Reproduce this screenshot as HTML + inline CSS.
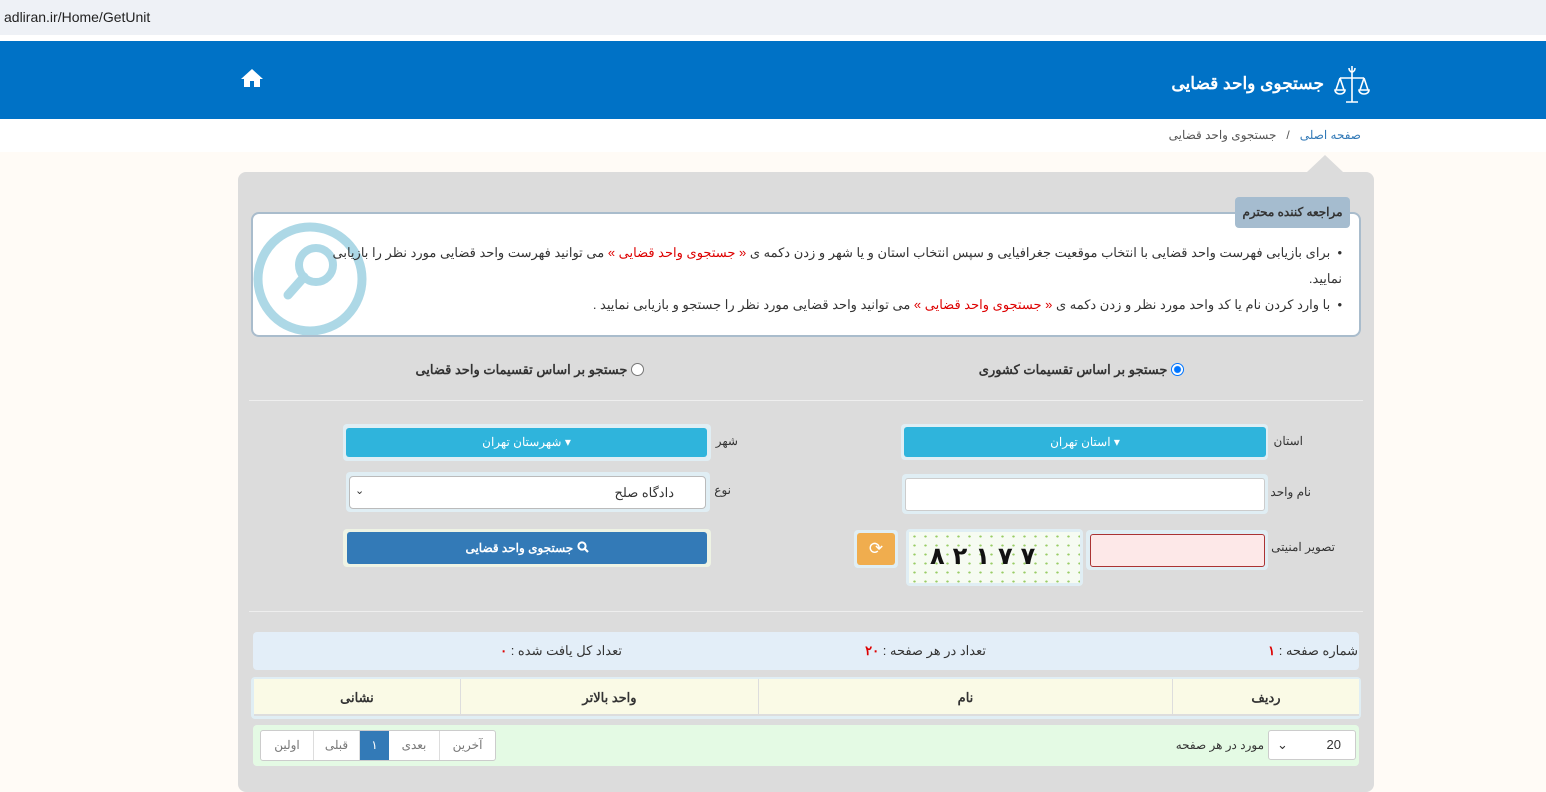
<!DOCTYPE html>
<html><head><meta charset="utf-8"><style>
*{margin:0;padding:0;box-sizing:border-box}
body{width:1546px;height:772px;overflow:hidden;position:relative;background:#fffbf6;font-family:"Liberation Sans","Noto Sans CJK SC",sans-serif;font-size:13px;color:#333}
.a{position:absolute}
.r{direction:rtl;white-space:nowrap}
.b{font-weight:bold}
.c{text-align:center;line-height:37px}
</style></head><body>
<div class="a" style="left:0;top:0;width:1546px;height:35px;background:#eef1f6"></div>
<div class="a" style="left:4px;top:9px;font-size:14px;color:#222">adliran.ir/Home/GetUnit</div>
<div class="a" style="left:0;top:35px;width:1546px;height:6px;background:#fff"></div>
<div class="a" style="left:0;top:41px;width:1546px;height:78px;background:#0072c6"></div>
<svg class="a" style="left:240px;top:68px" width="24" height="20" viewBox="0 0 24 20"><path d="M12 1L1 11h3v8h6v-6h4v6h6v-8h3z" fill="#fff"/></svg>
<div class="a r b" style="right:222px;top:74px;font-size:17px;color:#fff">جستجوی واحد قضایی</div>
<svg class="a" style="left:1334px;top:64px" width="36" height="40" viewBox="0 0 36 40" fill="none" stroke="#fff" stroke-width="1.6"><path d="M18 2v36M6 14h24M6 14l-4 12M6 14l4 12M30 14l-4 12M30 14l4 12M1 26a5 4 0 0 0 10 0zM25 26a5 4 0 0 0 10 0zM12 38h12M15 4a3 4 0 0 0 6 0"/></svg>
<div class="a" style="left:0;top:119px;width:1546px;height:33px;background:#fff"></div>
<div class="a r" style="right:185px;top:128px;font-size:12px;color:#555"><span style="color:#337ab7">صفحه اصلی</span>&nbsp;&nbsp;&nbsp;/&nbsp;&nbsp;&nbsp;جستجوی واحد قضایی</div>
<div class="a" style="left:238px;top:172px;width:1136px;height:620px;background:#dcdcdc;border-radius:8px"></div>
<div class="a" style="left:1307px;top:155px;width:0;height:0;border-left:18px solid transparent;border-right:18px solid transparent;border-bottom:17px solid #dcdcdc"></div>
<div class="a" style="left:251px;top:212px;width:1110px;height:125px;background:#fff;border:2px solid #a9bccc;border-radius:8px;overflow:hidden">
 <svg class="a" style="left:0;top:8px" width="120" height="120" viewBox="0 0 120 120"><circle cx="57" cy="57" r="52" fill="none" stroke="#add8e6" stroke-width="9"/><circle cx="63" cy="43" r="17" fill="none" stroke="#add8e6" stroke-width="8"/><path d="M51 55L35 73" stroke="#add8e6" stroke-width="9" stroke-linecap="round"/></svg>
</div>
<div class="a r b" style="left:1235px;top:197px;width:115px;height:31px;background:#a5bccf;border-radius:4px;font-size:12px;color:#333;text-align:center;line-height:31px">مراجعه کننده محترم</div>
<div class="a r" style="right:204px;top:240px;width:1015px;font-size:13px;line-height:26px;white-space:normal">• &nbsp;برای بازیابی فهرست واحد قضایی با انتخاب موقعیت جغرافیایی و سپس انتخاب استان و یا شهر و زدن دکمه ی <span style="color:#d00">« جستجوی واحد قضایی »</span> می توانید فهرست واحد قضایی مورد نظر را بازیابی نمایید.</div>
<div class="a r" style="right:204px;top:292px;font-size:13px;line-height:26px">• &nbsp;با وارد کردن نام یا کد واحد مورد نظر و زدن دکمه ی <span style="color:#d00">« جستجوی واحد قضایی »</span> می توانید واحد قضایی مورد نظر را جستجو و بازیابی نمایید .</div>
<div class="a r b" style="right:362px;top:362px;font-size:13px"><span style="display:inline-block;width:13px;height:13px;border-radius:50%;border:1px solid #0075ff;background:radial-gradient(#0075ff 3px,#fff 4px);vertical-align:-2px"></span> جستجو بر اساس تقسیمات کشوری</div>
<div class="a r b" style="right:902px;top:362px;font-size:13px"><span style="display:inline-block;width:13px;height:13px;border-radius:50%;border:1px solid #777;background:#fff;vertical-align:-2px"></span> جستجو بر اساس تقسیمات واحد قضایی</div>
<div class="a" style="left:249px;top:400px;width:1114px;height:1px;background:#eee"></div>
<div class="a" style="left:249px;top:611px;width:1114px;height:1px;background:#eee"></div>
<!-- right column -->
<div class="a r" style="right:243px;top:434px;font-size:12px">استان</div>
<div class="a" style="left:901px;top:424px;width:367px;height:36px;background:#e0eef4;border-radius:4px"></div>
<div class="a r" style="left:904px;top:427px;width:362px;height:30px;background:#2fb4dc;border-radius:3px;color:#fff;font-size:12px;text-align:center;line-height:30px">▾ استان تهران</div>
<div class="a r" style="right:235px;top:485px;font-size:12px">نام واحد</div>
<div class="a" style="left:902px;top:474px;width:366px;height:40px;background:#e0eef4;border-radius:4px"></div>
<div class="a" style="left:905px;top:478px;width:360px;height:33px;background:#fff;border:1px solid #ccc;border-radius:3px"></div>
<div class="a r" style="right:211px;top:540px;font-size:12px">تصویر امنیتی</div>
<div class="a" style="left:1086px;top:530px;width:182px;height:40px;background:#e0eef4;border-radius:4px"></div>
<div class="a" style="left:1090px;top:534px;width:175px;height:33px;background:#fde8e8;border:1px solid #a33;border-radius:3px"></div>
<div class="a" style="left:906px;top:529px;width:177px;height:57px;background:#e0eef4;border-radius:4px"></div>
<div class="a" style="left:909px;top:532px;width:171px;height:51px;background:#f6fbf2;background-image:radial-gradient(#9c6 1px,transparent 1.5px);background-size:11px 9px"></div>
<div class="a b" style="left:930px;top:542px;font-size:24px;color:#111;font-family:'DejaVu Sans',sans-serif;display:flex;gap:8px;direction:ltr"><span>۸</span><span>۲</span><span>۱</span><span>۷</span><span>۷</span></div>
<div class="a" style="left:854px;top:530px;width:44px;height:38px;background:#e0eef4;border-radius:4px"></div>
<div class="a" style="left:857px;top:533px;width:38px;height:32px;background:#f0ad4e;border-radius:3px;color:#fff;text-align:center;line-height:32px;font-size:17px">⟳</div>
<!-- left column -->
<div class="a r" style="right:808px;top:434px;font-size:12px">شهر</div>
<div class="a" style="left:343px;top:424px;width:368px;height:37px;background:#e0eef4;border-radius:4px"></div>
<div class="a r" style="left:346px;top:428px;width:361px;height:29px;background:#2fb4dc;border-radius:3px;color:#fff;font-size:12px;text-align:center;line-height:29px">▾ شهرستان تهران</div>
<div class="a r" style="right:815px;top:483px;font-size:12px">نوع</div>
<div class="a" style="left:346px;top:472px;width:364px;height:40px;background:#e0eef4;border-radius:4px"></div>
<div class="a" style="left:349px;top:476px;width:357px;height:33px;background:#fff;border:1px solid #bbb;border-radius:4px"></div>
<div class="a r" style="right:872px;top:485px;font-size:13px">دادگاه صلح</div>
<div class="a" style="left:355px;top:484px;font-size:11px">⌄</div>
<div class="a" style="left:343px;top:529px;width:368px;height:38px;background:#eef3e4;border-radius:4px"></div>
<div class="a r b" style="left:347px;top:532px;width:360px;height:32px;background:#337ab7;border-radius:3px;color:#fff;font-size:12px;text-align:center;line-height:32px"><svg width="12" height="12" viewBox="0 0 12 12" style="vertical-align:-1px"><circle cx="5" cy="5" r="3.6" fill="none" stroke="#fff" stroke-width="2"/><path d="M7.5 7.5L11 11" stroke="#fff" stroke-width="2.2"/></svg> جستجوی واحد قضایی</div>
<!-- info bar -->
<div class="a" style="left:253px;top:632px;width:1106px;height:38px;background:#e3eef8;border-radius:4px"></div>
<div class="a r" style="right:188px;top:643px;font-size:13px">شماره صفحه : <span style="color:#d00;font-weight:bold">۱</span></div>
<div class="a r" style="right:560px;top:643px;font-size:13px">تعداد در هر صفحه : <span style="color:#d00;font-weight:bold">۲۰</span></div>
<div class="a r" style="right:924px;top:643px;font-size:13px">تعداد کل یافت شده : <span style="color:#d00;font-weight:bold">۰</span></div>
<div class="a" style="left:251px;top:677px;width:1110px;height:42px;background:#e0eef4;border-radius:4px"></div>
<div class="a" style="left:254px;top:679px;width:1105px;height:37px;background:#fafae6;border-bottom:2px solid #ddd"></div>
<div class="a" style="left:460px;top:679px;width:1px;height:37px;background:#ddd"></div>
<div class="a" style="left:758px;top:679px;width:1px;height:37px;background:#ddd"></div>
<div class="a" style="left:1172px;top:679px;width:1px;height:37px;background:#ddd"></div>
<div class="a r b c" style="left:1173px;top:679px;width:186px">ردیف</div>
<div class="a r b c" style="left:759px;top:679px;width:413px">نام</div>
<div class="a r b c" style="left:461px;top:679px;width:297px">واحد بالاتر</div>
<div class="a r b c" style="left:254px;top:679px;width:206px">نشانی</div>
<div class="a" style="left:253px;top:725px;width:1106px;height:41px;background:#e4fae4;border-radius:4px"></div>
<div class="a" style="left:1268px;top:730px;width:88px;height:30px;background:#fff;border:1px solid #ccc;border-radius:3px;font-size:13px;line-height:28px;padding-left:8px">⌄<span style="float:right;margin-right:14px">20</span></div>
<div class="a r" style="right:282px;top:738px;font-size:12px">مورد در هر صفحه</div>
<div class="a r" style="left:260px;top:730px;width:236px;height:31px;background:#fff;border:1px solid #ccc;border-radius:3px;font-size:12px;color:#777;display:flex;direction:ltr">
 <div style="width:53px;text-align:center;line-height:29px;border-right:1px solid #ddd">اولین</div>
 <div style="width:46px;text-align:center;line-height:29px;border-right:1px solid #ddd">قبلی</div>
 <div style="width:29px;text-align:center;line-height:29px;background:#337ab7;color:#fff">۱</div>
 <div style="width:51px;text-align:center;line-height:29px;border-right:1px solid #ddd">بعدی</div>
 <div style="flex:1;text-align:center;line-height:29px">آخرین</div>
</div>
</body></html>
